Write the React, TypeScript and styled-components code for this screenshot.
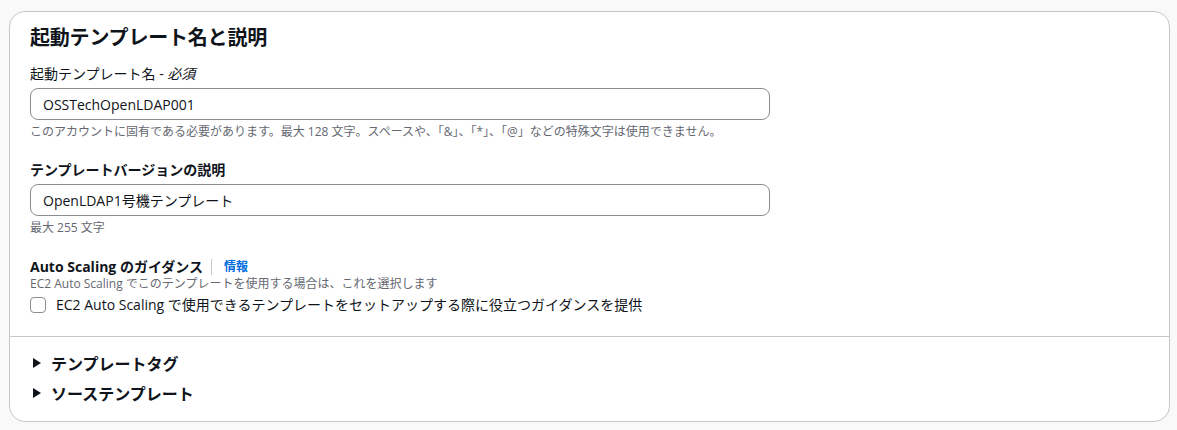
import styled, { createGlobalStyle } from "styled-components";

const GlobalStyle = createGlobalStyle`
  body {
    margin: 0;
    background: #f9f9fa;
    font-family: "Open Sans", "Noto Sans CJK JP", sans-serif;
    color: #0f141a;
  }
`;

const SPage = styled.div`
  padding: 11px 7px 9px 9px;
`;

const SCard = styled.section`
  background: #fff;
  border: 1px solid #c6c6cd;
  border-radius: 16px;
  overflow: hidden;
`;

const SBody = styled.div`
  padding: 14px 20px 19px 20px;
  display: flex;
  flex-direction: column;
`;

const SHeading = styled.h2`
  margin: 0 0 14px;
  font-size: 20px;
  line-height: 24px;
  font-weight: 700;
  letter-spacing: -0.2px;
`;

const SField = styled.div<{ $gap?: number }>`
  display: flex;
  flex-direction: column;
  margin-bottom: ${({ $gap }) => $gap ?? 20}px;
`;

const SLabel = styled.label<{ $bold?: boolean }>`
  display: flex;
  align-items: center;
  font-size: 14px;
  line-height: 20px;
  font-weight: ${({ $bold }) => ($bold ? 700 : 400)};
  em {
    font-style: italic;
  }
`;

const SInfo = styled.span`
  display: flex;
  align-items: center;
  font-size: 12px;
  font-weight: 700;
  color: #006ce0;
  &::before {
    content: "";
    width: 1px;
    height: 16px;
    background: #c6c6cd;
    margin: 0 12px 0 8px;
  }
`;

const SInput = styled.input`
  width: 740px;
  height: 32px;
  box-sizing: border-box;
  margin-top: 4px;
  padding: 0 12px;
  border: 1px solid #8c8c94;
  border-radius: 8px;
  font: inherit;
  font-size: 14px;
  color: #0f141a;
  outline: none;
`;

const SHint = styled.div<{ $top?: number }>`
  margin-top: ${({ $top }) => $top ?? 4}px;
  font-size: 12px;
  line-height: 16px;
  color: #656871;
`;

const SCheckRow = styled.label`
  display: flex;
  align-items: center;
  gap: 10px;
  margin-top: 1px;
  font-size: 14px;
  line-height: 24px;
`;

const SCheckbox = styled.span`
  width: 14px;
  height: 14px;
  border: 1px solid #8c8c94;
  border-radius: 4px;
  background: #fff;
`;

const SDivider = styled.hr`
  margin: 0;
  border: 0;
  border-top: 1px solid #c6c6cd;
`;

const SExpandList = styled.div`
  padding: 11px 20px 13px 23px;
  display: flex;
  flex-direction: column;
`;

const SExpand = styled.div`
  display: flex;
  align-items: center;
  gap: 10px;
  height: 30px;
  font-size: 16px;
  font-weight: 700;
`;

const Caret = () => (
  <svg width="8" height="10" viewBox="0 0 8 10">
    <path d="M0 0 L8 5 L0 10 Z" fill="#0f141a" />
  </svg>
);

const App = () => {
  return (
    <>
      <GlobalStyle />
      <SPage>
        <SCard>
          <SBody>
            <SHeading>起動テンプレート名と説明</SHeading>
            <SField>
              <SLabel>
                起動テンプレート名 -&nbsp;<em>必須</em>
              </SLabel>
              <SInput defaultValue="OSSTechOpenLDAP001" />
              <SHint>
                このアカウントに固有である必要があります。最大 128 文字。スペースや、「&」、「*」、「@」などの特殊文字は使用できません。
              </SHint>
            </SField>
            <SField $gap={21}>
              <SLabel $bold>テンプレートバージョンの説明</SLabel>
              <SInput defaultValue="OpenLDAP1号機テンプレート" />
              <SHint>最大 255 文字</SHint>
            </SField>
            <SField $gap={0}>
              <SLabel $bold>
                Auto Scaling のガイダンス
                <SInfo>情報</SInfo>
              </SLabel>
              <SHint $top={-1}>
                EC2 Auto Scaling でこのテンプレートを使用する場合は、これを選択します
              </SHint>
              <SCheckRow>
                <SCheckbox />
                EC2 Auto Scaling で使用できるテンプレートをセットアップする際に役立つガイダンスを提供
              </SCheckRow>
            </SField>
          </SBody>
          <SDivider />
          <SExpandList>
            <SExpand>
              <Caret />
              テンプレートタグ
            </SExpand>
            <SExpand>
              <Caret />
              ソーステンプレート
            </SExpand>
          </SExpandList>
        </SCard>
      </SPage>
    </>
  );
};

export default App;
